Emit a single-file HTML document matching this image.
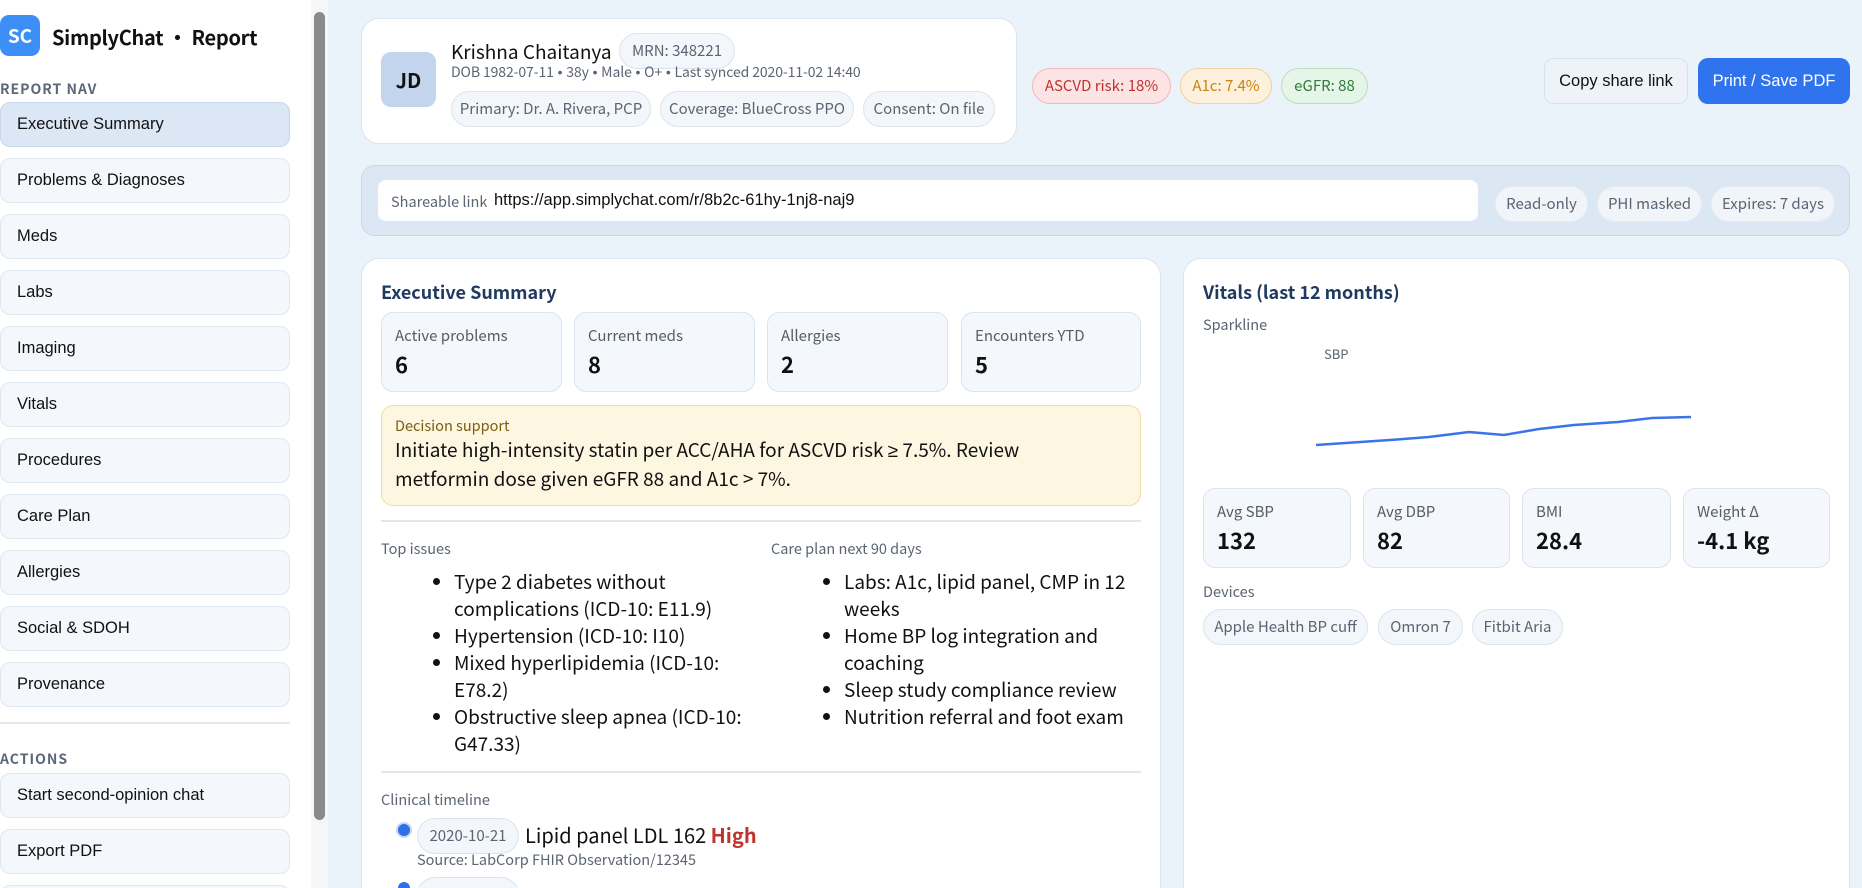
<!DOCTYPE html>
<html><head><meta charset="utf-8"><style>
*{box-sizing:border-box;margin:0;padding:0}
html{width:1862px;height:888px;overflow:hidden}
body{width:1862px;height:888px;overflow:hidden;background:#eaf2fa;font-family:"Noto Sans CJK SC","Liberation Sans",sans-serif;color:#111;position:relative}
.a{position:absolute;white-space:nowrap}
.ls{font-family:"Liberation Sans",sans-serif}
#side{left:0;top:0;width:311px;height:888px;background:#fff}
.nav{position:absolute;left:0;width:290px;height:45px;background:#f4f7fb;border:1px solid #dfe7f0;border-radius:10px;font-family:"Liberation Sans",sans-serif;font-size:16.5px;color:#111;padding-left:16px;line-height:43px}
.card{position:absolute;background:#fff;border:1px solid #dbe5f0;border-radius:18px}
.chip{position:absolute;height:36px;border:1px solid #dbe4ee;background:#f3f7fb;border-radius:18px;font-size:15px;color:#5b6472;text-align:center;line-height:34px;white-space:nowrap}
.stat{position:absolute;height:80px;background:#f4f7fb;border:1px solid #dbe4ee;border-radius:12px;padding:12px 0 0 13px}
.stat .l{font-size:15px;color:#555d69}
.stat .v{font-size:22px;font-weight:bold;color:#111;margin-top:2px}
.lbl{position:absolute;font-size:14.5px;color:#5b6472}
ul{position:absolute;font-size:19px;line-height:27px;list-style:disc;padding-left:0}
</style></head><body>
<div id="side" class="a">
 <div class="a" style="left:0;top:15px;width:40px;height:41px;background:#3b8ff6;border-radius:9px;color:#fff;font-weight:bold;font-size:19px;text-align:center;line-height:41px">SC</div>
 <div class="a" style="left:52px;top:22px;font-size:20px;font-weight:bold;letter-spacing:-0.3px">SimplyChat • Report</div>
 <div class="a" style="left:0;top:79px;font-size:14px;font-weight:bold;letter-spacing:1px;color:#5b6777">REPORT NAV</div>
 <div class="nav" style="top:102px;background:#dce7f5;border-color:#c9d7ea">Executive Summary</div>
 <div class="nav" style="top:158px">Problems &amp; Diagnoses</div>
 <div class="nav" style="top:214px">Meds</div>
 <div class="nav" style="top:270px">Labs</div>
 <div class="nav" style="top:326px">Imaging</div>
 <div class="nav" style="top:382px">Vitals</div>
 <div class="nav" style="top:438px">Procedures</div>
 <div class="nav" style="top:494px">Care Plan</div>
 <div class="nav" style="top:550px">Allergies</div>
 <div class="nav" style="top:606px">Social &amp; SDOH</div>
 <div class="nav" style="top:662px">Provenance</div>
 <div class="a" style="left:0;top:722px;width:290px;height:2px;background:#e4e9ef"></div>
 <div class="a" style="left:0;top:749px;font-size:14px;font-weight:bold;letter-spacing:1px;color:#5b6777">ACTIONS</div>
 <div class="nav" style="top:773px">Start second-opinion chat</div>
 <div class="nav" style="top:829px">Export PDF</div>
 <div class="nav" style="top:885px"></div>
</div>
<div class="a" style="left:311px;top:0;width:17px;height:888px;background:#f6f6f6"></div>
<div class="a" style="left:314px;top:12px;width:11px;height:808px;background:#8a8a8a;border-radius:6px"></div>

<!-- patient card -->
<div class="card" style="left:361px;top:18px;width:656px;height:126px"></div>
<div class="a" style="left:381px;top:52px;width:55px;height:55px;background:#c3d5ec;border-radius:10px;font-weight:bold;font-size:20px;text-align:center;line-height:55px;color:#111">JD</div>
<div class="a" style="left:451px;top:38px;font-size:19px;color:#111">Krishna Chaitanya</div>
<div class="chip" style="left:619px;top:33px;width:116px">MRN: 348221</div>
<div class="a" style="left:451px;top:62px;font-size:14px;color:#5b6472;letter-spacing:-0.1px">DOB 1982-07-11<span class="ls"> • </span>38y<span class="ls"> • </span>Male<span class="ls"> • </span>O+<span class="ls"> • </span>Last synced 2020-11-02 14:40</div>
<div class="chip" style="left:451px;top:91px;width:200px">Primary: Dr. A. Rivera, PCP</div>
<div class="chip" style="left:660px;top:91px;width:194px">Coverage: BlueCross PPO</div>
<div class="chip" style="left:863px;top:91px;width:132px">Consent: On file</div>
<div class="chip" style="left:1032px;top:68px;width:139px;background:#fde4e4;border-color:#f0b9b9;color:#c0322d">ASCVD risk: 18%</div>
<div class="chip" style="left:1180px;top:68px;width:92px;background:#fdf0dc;border-color:#f2d29a;color:#c98512">A1c: 7.4%</div>
<div class="chip" style="left:1281px;top:68px;width:87px;background:#e5f5e7;border-color:#b9e0bf;color:#2f7d3b">eGFR: 88</div>
<div class="a ls" style="left:1544px;top:58px;width:144px;height:46px;background:#eef3f9;border:1px solid #d9e2ec;border-radius:10px;font-size:16.5px;text-align:center;line-height:44px">Copy share link</div>
<div class="a ls" style="left:1698px;top:58px;width:152px;height:46px;background:#2f74ee;border-radius:10px;font-size:16.5px;color:#fff;text-align:center;line-height:46px">Print / Save PDF</div>

<!-- share bar -->
<div class="a" style="left:361px;top:165px;width:1489px;height:71px;background:#dce7f4;border:1px solid #c8d7ea;border-radius:14px"></div>
<div class="a" style="left:378px;top:180px;width:1100px;height:41px;background:#fff;border-radius:8px"></div>
<div class="a" style="left:391px;top:191px;font-size:14.5px;color:#5b6472">Shareable link</div>
<div class="a ls" style="left:494px;top:191px;font-size:16.5px;color:#111">https://app.simplychat.com/r/8b2c-61hy-1nj8-naj9</div>
<div class="chip" style="left:1495px;top:186px;width:93px;border-color:#e5ecf4;background:#f1f5fa">Read-only</div>
<div class="chip" style="left:1597px;top:186px;width:105px;border-color:#e5ecf4;background:#f1f5fa">PHI masked</div>
<div class="chip" style="left:1711px;top:186px;width:124px;border-color:#e5ecf4;background:#f1f5fa">Expires: 7 days</div>

<!-- exec summary -->
<div class="card" style="left:361px;top:258px;width:800px;height:660px"></div>
<div class="a" style="left:381px;top:279px;font-size:18px;font-weight:bold;color:#1e3a5f">Executive Summary</div>
<div class="stat" style="left:381px;top:312px;width:181px"><div class="l">Active problems</div><div class="v">6</div></div>
<div class="stat" style="left:574px;top:312px;width:181px"><div class="l">Current meds</div><div class="v">8</div></div>
<div class="stat" style="left:767px;top:312px;width:181px"><div class="l">Allergies</div><div class="v">2</div></div>
<div class="stat" style="left:961px;top:312px;width:180px"><div class="l">Encounters YTD</div><div class="v">5</div></div>
<div class="a" style="left:381px;top:405px;width:760px;height:101px;background:#fdf6e1;border:1px solid #f1dea4;border-radius:12px;padding:9px 13px">
 <div style="font-size:14.5px;color:#7a5d12">Decision support</div>
 <div style="font-size:19px;line-height:27px;color:#111">Initiate high-intensity statin per ACC/AHA for ASCVD risk <span class="ls">≥</span> 7.5%. Review<br>metformin dose given eGFR 88 and A1c &gt; 7%.</div>
</div>
<div class="a" style="left:381px;top:520px;width:760px;height:2px;background:#e2e7ee"></div>
<div class="lbl" style="left:381px;top:538px">Top issues</div>
<div class="lbl" style="left:771px;top:538px">Care plan next 90 days</div>
<ul style="left:454px;top:568px;width:300px"><li>Type 2 diabetes without complications (ICD-10: E11.9)</li><li>Hypertension (ICD-10: I10)</li><li>Mixed hyperlipidemia (ICD-10: E78.2)</li><li>Obstructive sleep apnea (ICD-10: G47.33)</li></ul>
<ul style="left:844px;top:568px;width:300px"><li>Labs: A1c, lipid panel, CMP in 12 weeks</li><li>Home BP log integration and coaching</li><li>Sleep study compliance review</li><li>Nutrition referral and foot exam</li></ul>
<div class="a" style="left:381px;top:771px;width:760px;height:2px;background:#e2e7ee"></div>
<div class="lbl" style="left:381px;top:789px">Clinical timeline</div>
<div class="a" style="left:398px;top:824px;width:12px;height:12px;border-radius:6px;background:#2f6fe8;box-shadow:0 0 0 2px #c7d8f6"></div>
<div class="chip" style="left:417px;top:818px;width:102px;height:36px">2020-10-21</div>
<div class="a" style="left:525px;top:820px;font-size:20px">Lipid panel LDL 162 <b style="color:#c0322d">High</b></div>
<div class="a" style="left:417px;top:849px;font-size:14.5px;color:#5b6472">Source: LabCorp FHIR Observation/12345</div>
<div class="a" style="left:398px;top:882px;width:12px;height:12px;border-radius:6px;background:#2f6fe8"></div>
<div class="chip" style="left:417px;top:877px;width:102px;height:36px"></div>

<!-- vitals -->
<div class="card" style="left:1183px;top:258px;width:667px;height:660px"></div>
<div class="a" style="left:1203px;top:279px;font-size:18px;font-weight:bold;color:#1e3a5f">Vitals (last 12 months)</div>
<div class="lbl" style="left:1203px;top:314px">Sparkline</div>
<div class="a" style="left:1324px;top:344px;font-size:13px;color:#5b6472">SBP</div>
<svg class="a" style="left:1290px;top:400px" width="420" height="70"><polyline fill="none" stroke="#3b74e6" stroke-width="2.5" points="26,45 100,40 139,37 179,32 214,35 249,29 284,25 328,22 362,18 401,17"/></svg>
<div class="stat" style="left:1203px;top:488px;width:148px"><div class="l">Avg SBP</div><div class="v">132</div></div>
<div class="stat" style="left:1363px;top:488px;width:147px"><div class="l">Avg DBP</div><div class="v">82</div></div>
<div class="stat" style="left:1522px;top:488px;width:149px"><div class="l">BMI</div><div class="v">28.4</div></div>
<div class="stat" style="left:1683px;top:488px;width:147px"><div class="l">Weight Δ</div><div class="v">-4.1 kg</div></div>
<div class="lbl" style="left:1203px;top:581px">Devices</div>
<div class="chip" style="left:1203px;top:609px;width:165px">Apple Health BP cuff</div>
<div class="chip" style="left:1378px;top:609px;width:85px">Omron 7</div>
<div class="chip" style="left:1472px;top:609px;width:91px">Fitbit Aria</div>
</body></html>
